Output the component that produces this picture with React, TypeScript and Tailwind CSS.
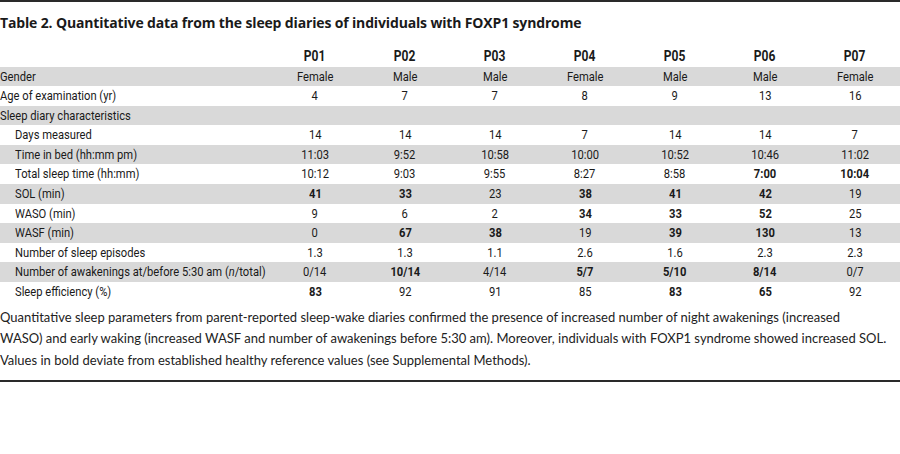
import React from 'react'

type Cell = string | { v: string; b: true }

type Row = {
  label: React.ReactNode
  indent?: boolean
  values: Cell[]
}

const B = (v: string) => ({ v, b: true as const })

const rows: Row[] = [
  { label: 'Gender', values: ['Female', 'Male', 'Male', 'Female', 'Male', 'Male', 'Female'] },
  { label: 'Age of examination (yr)', values: ['4', '7', '7', '8', '9', '13', '16'] },
  { label: 'Sleep diary characteristics', values: ['', '', '', '', '', '', ''] },
  { label: 'Days measured', indent: true, values: ['14', '14', '14', '7', '14', '14', '7'] },
  { label: 'Time in bed (hh:mm pm)', indent: true, values: ['11:03', '9:52', '10:58', '10:00', '10:52', '10:46', '11:02'] },
  { label: 'Total sleep time (hh:mm)', indent: true, values: ['10:12', '9:03', '9:55', '8:27', '8:58', B('7:00'), B('10:04')] },
  { label: 'SOL (min)', indent: true, values: [B('41'), B('33'), '23', B('38'), B('41'), B('42'), '19'] },
  { label: 'WASO (min)', indent: true, values: ['9', '6', '2', B('34'), B('33'), B('52'), '25'] },
  { label: 'WASF (min)', indent: true, values: ['0', B('67'), B('38'), '19', B('39'), B('130'), '13'] },
  { label: 'Number of sleep episodes', indent: true, values: ['1.3', '1.3', '1.1', '2.6', '1.6', '2.3', '2.3'] },
  {
    label: (
      <>
        Number of awakenings at/before 5:30 am (<i>n</i>/total)
      </>
    ),
    indent: true,
    values: ['0/14', B('10/14'), '4/14', B('5/7'), B('5/10'), B('8/14'), '0/7'],
  },
  { label: 'Sleep efficiency (%)', indent: true, values: [B('83'), '92', '91', '85', B('83'), B('65'), '92'] },
]

const heads = ['P01', 'P02', 'P03', 'P04', 'P05', 'P06', 'P07']

// the table face in the picture is a condensed sans; squeeze Roboto to match
const narrow = 'inline-block whitespace-nowrap scale-x-[0.86]'

export default function App() {
  return (
    <div className="w-[900px] h-[454px] bg-white text-[#1a1a1a] overflow-hidden">
      <div className="border-t-2 border-[#2a2a2a]" />
      <h1 className="mt-[11px] h-[20px] leading-[20px] text-[14px] font-bold font-['Open_Sans',sans-serif] tracking-[-0.15px]">
        Table 2. Quantitative data from the sleep diaries of individuals with FOXP1 syndrome
      </h1>
      <div className="mt-[14px] font-['Roboto',sans-serif] text-[13px]">
        <div className="grid grid-cols-[270px_repeat(7,90px)] h-[19.5px] leading-[19.5px] font-bold text-[14px]">
          <div />
          {heads.map(h => (
            <div key={h} className="text-center">
              <span className={narrow}>{h}</span>
            </div>
          ))}
        </div>
        {rows.map((r, i) => (
          <div
            key={i}
            className={`grid grid-cols-[270px_repeat(7,90px)] h-[19.6px] leading-[19.6px] ${i % 2 === 0 ? 'bg-[#d9d9d9]' : 'bg-white'}`}
          >
            <div className={r.indent ? 'pl-[15px]' : ''}>
              <span className={`${narrow} origin-left`}>{r.label}</span>
            </div>
            {r.values.map((v, j) => (
              <div key={j} className={`text-center ${typeof v === 'string' ? '' : 'font-bold'}`}>
                <span className={narrow}>{typeof v === 'string' ? v : v.v}</span>
              </div>
            ))}
          </div>
        ))}
      </div>
      <p className="mt-[5px] text-[13px] leading-[21.5px] font-['Lato',sans-serif] text-[#222] whitespace-nowrap">
        Quantitative sleep parameters from parent-reported sleep-wake diaries confirmed the presence of increased number of night awakenings (increased
        <br />
        WASO) and early waking (increased WASF and number of awakenings before 5:30 am). Moreover, individuals with FOXP1 syndrome showed increased SOL.
        <br />
        Values in bold deviate from established healthy reference values (see Supplemental Methods).
      </p>
      <div className="mt-[9px] border-t-2 border-[#2a2a2a]" />
    </div>
  )
}
